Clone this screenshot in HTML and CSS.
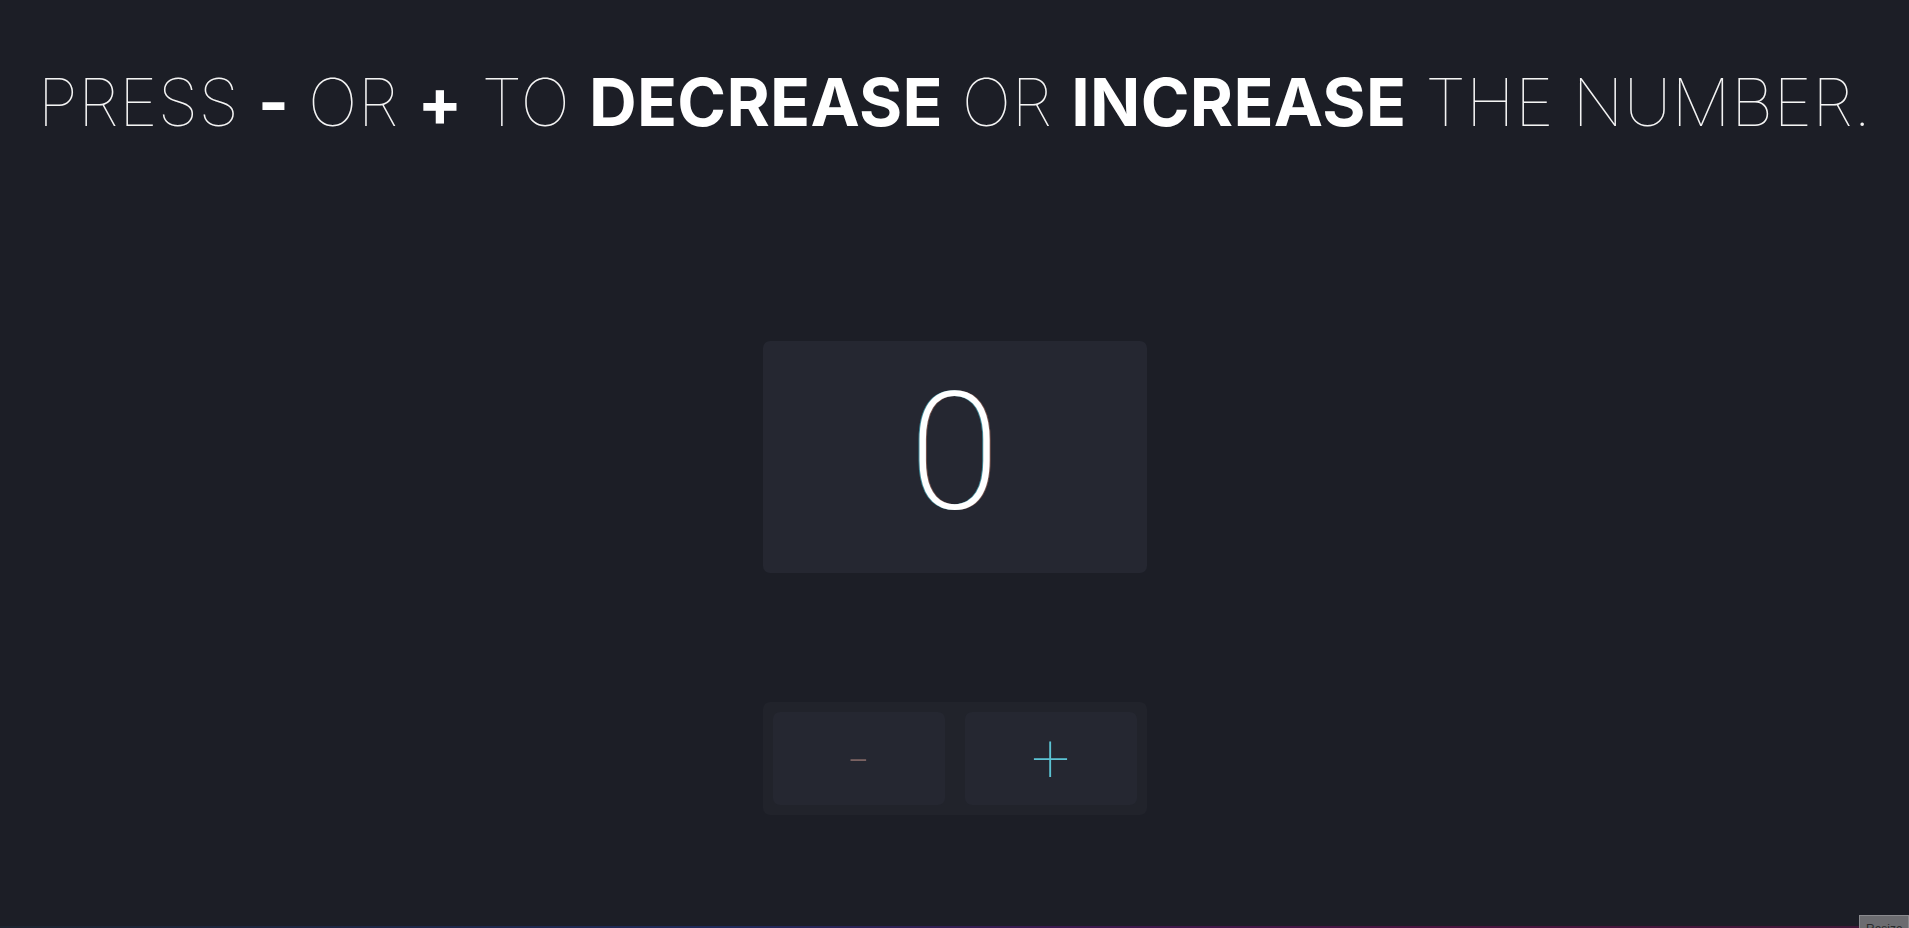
FILE: index.html
```html
<!DOCTYPE html>
<html lang="en">
<head>
<meta charset="utf-8">
<title>Counter</title>
<link rel="stylesheet" href="styles.css">
</head>
<body>
<div class="page">
  <h1 class="title">PRESS <b>-</b> OR <b>+</b> TO <b>DECREASE</b> OR <b>INCREASE</b> THE NUMBER.</h1>
  <div class="counter">
    <div class="display"><span class="value">0</span></div>
    <div class="controls">
      <button class="btn btn-minus" type="button">-</button>
      <button class="btn btn-plus" type="button">+</button>
    </div>
  </div>
</div>
<div class="glow"></div>
<div class="badge">Resize</div>
</body>
</html>
```
FILE: styles.css
```css
html, body {
  margin: 0;
  padding: 0;
  height: 100%;
  overflow: hidden;
}
body {
  background: #1c1e26;
  font-family: Inter, Roboto, "Liberation Sans", sans-serif;
  color: #ffffff;
}
.page {
  display: flex;
  flex-direction: column;
  align-items: center;
}
.title {
  margin: 0;
  padding-top: 64px;
  font-size: 66px;
  font-weight: 100;
  line-height: 77px;
  letter-spacing: 0.3px;
  text-align: center;
  white-space: nowrap;
  color: #f4f4f4;
}
.title b {
  font-weight: 700;
  color: #ffffff;
}
.counter {
  margin-top: 200px;
  display: flex;
  flex-direction: column;
  align-items: center;
  gap: 129px;
}
.display {
  width: 384px;
  height: 232px;
  box-sizing: border-box;
  padding-bottom: 10px;
  background: #252731;
  border-radius: 7px;
  display: flex;
  align-items: center;
  justify-content: center;
}
.value {
  font-family: Roboto, "Liberation Sans", sans-serif;
  font-size: 163px;
  font-weight: 200;
  line-height: 1;
  color: #ffffff;
  text-shadow: -1px 0 rgba(90, 220, 240, 0.55), 1px 0 rgba(240, 150, 120, 0.4);
}
.controls {
  width: 384px;
  box-sizing: border-box;
  padding: 10px;
  background: #21232b;
  border-radius: 7px;
  display: grid;
  grid-template-columns: 1fr 1fr;
  gap: 20px;
}
.btn {
  height: 93px;
  border: none;
  border-radius: 7px;
  background: #252731;
  font-family: Roboto, "Liberation Sans", sans-serif;
  font-weight: 100;
  font-size: 68px;
  line-height: 1;
  padding: 0;
  cursor: pointer;
}
.btn-minus {
  color: #7a6262;
}
.btn-plus {
  color: #5cc3d3;
}
.glow {
  position: fixed;
  left: 0;
  right: 0;
  bottom: 0;
  height: 2px;
  background: linear-gradient(90deg, #1c2430 0%, #1f2a5a 38%, #3a1a50 55%, #4a1440 75%, #401838 100%);
}
.badge {
  position: fixed;
  right: 0;
  bottom: -14px;
  width: 50px;
  height: 27px;
  background: #6c6c70;
  border: 1px solid #8a8a8e;
  color: #2a2a2a;
  font-family: "Liberation Sans", sans-serif;
  font-size: 12px;
  padding: 6px 0 0 6px;
  box-sizing: border-box;
}
```
